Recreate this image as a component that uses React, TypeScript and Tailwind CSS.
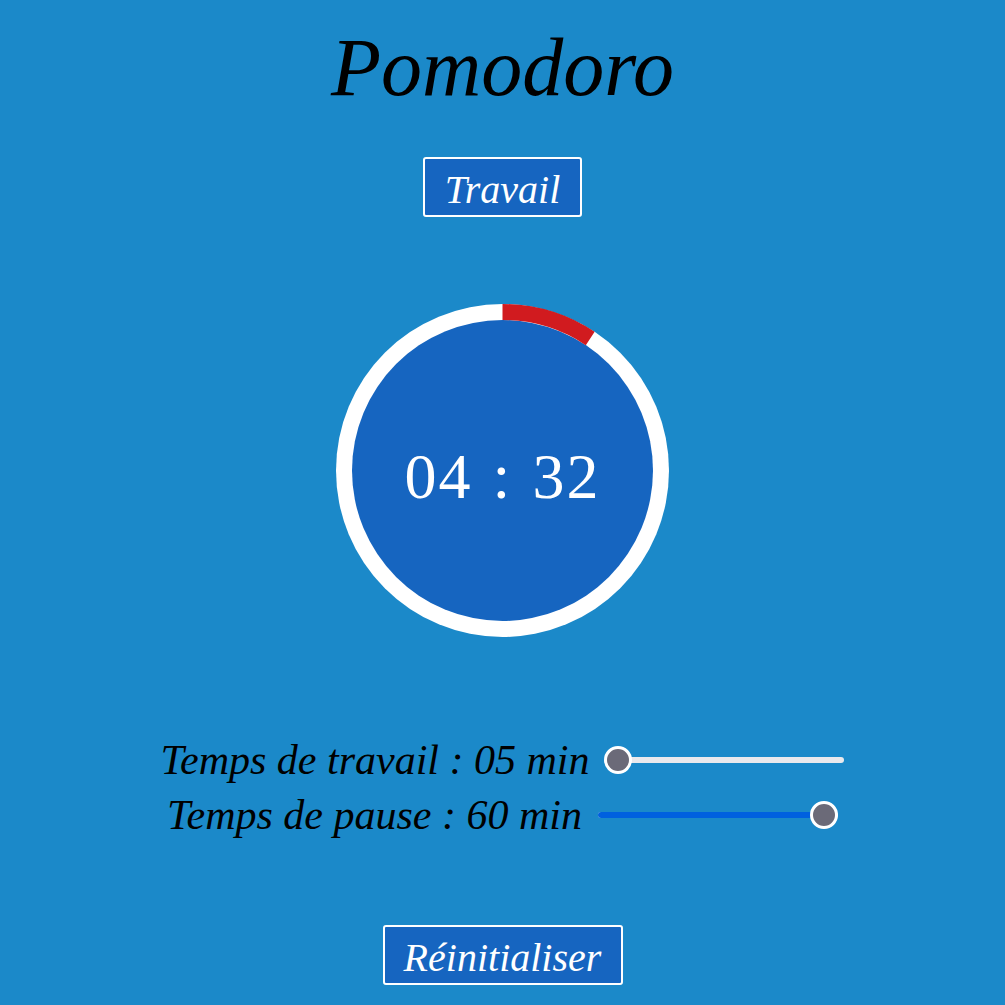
import React from "react";

const font = { fontFamily: '"Liberation Serif", "DejaVu Serif", serif' };

function Slider({ value }: { value: number }) {
  const width = 240;
  const thumb = 28;
  const pos = value * (width - thumb);
  return (
    <div className="relative w-[240px] h-[28px] flex items-center">
      <div className="w-full h-[6px] rounded-full bg-[#e9e9ed] overflow-hidden flex">
        <div className="h-full bg-[#0060df]" style={{ width: pos + thumb / 2 }} />
      </div>
      <div
        className="absolute top-0 w-[28px] h-[28px] rounded-full bg-[#6b6a78] border-[3px] border-white"
        style={{ left: pos }}
      />
    </div>
  );
}

export default function App() {
  const size = 333;
  const c = size / 2;
  const r = c - 8;
  const frac = 28 / 300;
  const ang = frac * 2 * Math.PI;
  const ex = c + r * Math.sin(ang);
  const ey = c - r * Math.cos(ang);
  return (
    <div className="min-h-screen w-full bg-[#1b89c9] flex flex-col items-center" style={font}>
      <h1 className="mt-[27px] text-[82px] leading-[82px] italic text-black">Pomodoro</h1>
      <button className="mt-[48px] w-[159px] h-[60px] bg-[#1665c0] border-2 border-white rounded-[3px] text-white italic text-[40px] leading-none flex items-center justify-center">
        <span className="mt-[6px]">Travail</span>
      </button>
      <div className="mt-[87px] relative w-[333px] h-[333px] flex items-center justify-center">
        <svg width={size} height={size} className="absolute inset-0">
          <circle cx={c} cy={c} r={c} fill="white" />
          <circle cx={c} cy={c} r={c - 16} fill="#1665c0" />
          <path
            d={`M ${c} ${c - r} A ${r} ${r} 0 0 1 ${ex} ${ey}`}
            stroke="#d11b1f"
            strokeWidth={16}
            fill="none"
          />
        </svg>
        <span className="relative text-white text-[64px] leading-none mt-[12px] tracking-[2px] [word-spacing:2px]">04 : 32</span>
      </div>
      <div className="mt-[98px] flex flex-col items-center">
        <div className="h-[50px] flex items-center gap-[15px]">
          <span className="italic text-[42px] leading-none text-black">Temps de travail : 05 min</span>
          <Slider value={0} />
        </div>
        <div className="h-[60px] flex items-center gap-[16px]">
          <span className="italic text-[42px] leading-none text-black">Temps de pause : 60 min</span>
          <Slider value={1} />
        </div>
      </div>
      <button className="mt-[80px] w-[240px] h-[60px] bg-[#1665c0] border-2 border-white rounded-[3px] text-white italic text-[40px] leading-none flex items-center justify-center">
        <span className="mt-[6px]">Réinitialiser</span>
      </button>
    </div>
  );
}
